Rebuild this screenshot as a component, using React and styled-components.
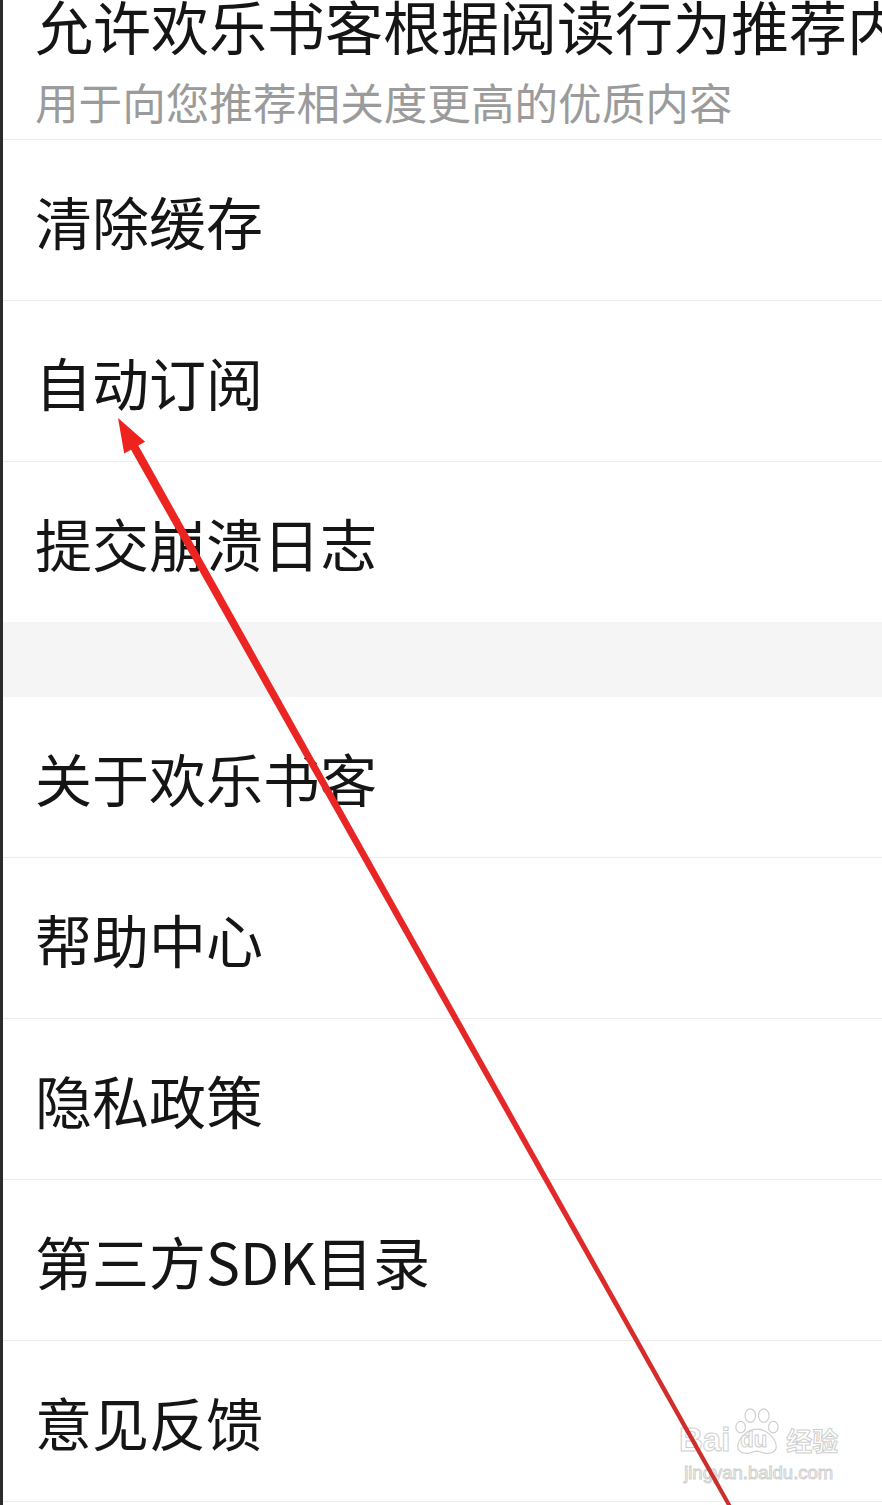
import React from 'react';
import styled, { createGlobalStyle } from 'styled-components';

const GlobalStyle = createGlobalStyle`
  html, body {
    margin: 0;
    padding: 0;
    background: #ffffff;
    overflow: hidden;
  }
  body {
    font-family: "Noto Sans CJK SC", "Noto Sans", sans-serif;
  }
`;

const Screen = styled.div`
  position: relative;
  width: 882px;
  height: 1505px;
  overflow: hidden;
  box-sizing: border-box;
  border-left: 3px solid #2b2b2b;
  background: #ffffff;
`;

const List = styled.div`
  display: flex;
  flex-direction: column;
  margin-top: -7px;
`;

const ToggleItem = styled.div`
  display: flex;
  flex-direction: column;
  gap: 16px;
  padding: 0 0 10px 32px;
  border-bottom: 1px solid #ececec;
  white-space: nowrap;
  overflow: hidden;
`;

const Title = styled.div`
  font-size: 58px;
  line-height: 64px;
  color: #151515;
`;

const Subtitle = styled.div`
  font-size: 43.6px;
  line-height: 56px;
  color: #9b9b9b;
`;

const Row = styled.div`
  display: flex;
  align-items: center;
  height: 160px;
  padding-left: 32px;
  font-size: 57px;
  color: #151515;
  white-space: nowrap;
  border-bottom: ${p => (p.$last ? 'none' : '1px solid #ececec')};
`;

const Gap = styled.div`
  height: 75px;
  background: #f5f5f5;
`;

const ArrowLayer = styled.svg`
  position: absolute;
  left: -3px;
  top: 0;
  pointer-events: none;
`;

const Watermark = styled.div`
  position: absolute;
  left: 676px;
  top: 1406px;
  display: flex;
  flex-direction: column;
  align-items: center;
  font-family: "Liberation Sans", Arial, sans-serif;
  color: #ffffff;
  -webkit-text-stroke: 1px #cfcfcf;
`;

const BrandLine = styled.div`
  display: flex;
  align-items: flex-end;
  gap: 2px;
`;

const BrandWord = styled.span`
  font-size: 33px;
  font-weight: 700;
  line-height: 32px;
`;

const Paw = styled.div`
  position: relative;
  width: 50px;
  height: 50px;
`;

const PawText = styled.span`
  position: absolute;
  left: 8px;
  bottom: 3px;
  font-size: 22px;
  font-weight: 700;
`;

const Jingyan = styled.span`
  font-family: "Noto Sans CJK SC", sans-serif;
  font-size: 26px;
  font-weight: 700;
  line-height: 32px;
  margin-left: 2px;
`;

const Domain = styled.div`
  font-size: 18.5px;
  line-height: 22px;
  margin-top: 6px;
`;

const rows = ['清除缓存', '自动订阅', '提交崩溃日志'];
const rows2 = ['关于欢乐书客', '帮助中心', '隐私政策', '第三方SDK目录', '意见反馈'];

function Arrow() {
  const tip = [118, 418];
  const end = [733, 1512];
  const dx = end[0] - tip[0];
  const dy = end[1] - tip[1];
  const len = Math.hypot(dx, dy);
  const ux = dx / len;
  const uy = dy / len;
  const px = -uy;
  const py = ux;
  const headLen = 34;
  const headHalf = 12;
  const bx = tip[0] + ux * headLen;
  const by = tip[1] + uy * headLen;
  const sx = tip[0] + ux * (headLen - 6);
  const sy = tip[1] + uy * (headLen - 6);
  const w0 = 4.2;
  const w1 = 2;
  const shaft = [
    [sx + px * w0, sy + py * w0],
    [end[0] + px * w1, end[1] + py * w1],
    [end[0] - px * w1, end[1] - py * w1],
    [sx - px * w0, sy - py * w0],
  ];
  const head = [
    tip,
    [bx + px * headHalf, by + py * headHalf],
    [bx - px * headHalf, by - py * headHalf],
  ];
  const pts = a => a.map(p => p.join(',')).join(' ');
  return (
    <ArrowLayer width="882" height="1505" viewBox="0 0 882 1505">
      <defs>
        <linearGradient id="shaft" x1={tip[0]} y1={tip[1]} x2={end[0]} y2={end[1]} gradientUnits="userSpaceOnUse">
          <stop offset="0" stopColor="#ee2320" />
          <stop offset="0.7" stopColor="#e4282a" />
          <stop offset="1" stopColor="#c8302c" />
        </linearGradient>
      </defs>
      <polygon points={pts(shaft)} fill="url(#shaft)" />
      <polygon points={pts(head)} fill="#ee2320" />
    </ArrowLayer>
  );
}

function BaiduMark() {
  return (
    <Watermark>
      <BrandLine>
        <BrandWord>Bai</BrandWord>
        <Paw>
          <svg width="50" height="50" viewBox="0 0 52 52" style={{ position: 'absolute', left: 0, top: 0 }}>
            <g fill="#ffffff" stroke="#cfcfcf" strokeWidth="1.2">
              <ellipse cx="9" cy="22" rx="5" ry="6" />
              <ellipse cx="19" cy="10" rx="5.5" ry="7" />
              <ellipse cx="33" cy="10" rx="5.5" ry="7" />
              <ellipse cx="43" cy="22" rx="5" ry="6" />
              <path d="M26 24 C16 24 6 34 6 42 C6 48 12 50 18 49 C22 48 24 47 26 47 C28 47 30 48 34 49 C40 50 46 48 46 42 C46 34 36 24 26 24 Z" />
            </g>
          </svg>
          <PawText>du</PawText>
        </Paw>
        <Jingyan>经验</Jingyan>
      </BrandLine>
      <Domain>jingyan.baidu.com</Domain>
    </Watermark>
  );
}

export default function App() {
  return (
    <Screen>
      <GlobalStyle />
      <List>
        <ToggleItem>
          <Title>允许欢乐书客根据阅读行为推荐内容</Title>
          <Subtitle>用于向您推荐相关度更高的优质内容</Subtitle>
        </ToggleItem>
        {rows.map((r, i) => (
          <Row key={r} $last={i === rows.length - 1}>{r}</Row>
        ))}
        <Gap />
        {rows2.map(r => (
          <Row key={r}>{r}</Row>
        ))}
      </List>
      <BaiduMark />
      <Arrow />
    </Screen>
  );
}
